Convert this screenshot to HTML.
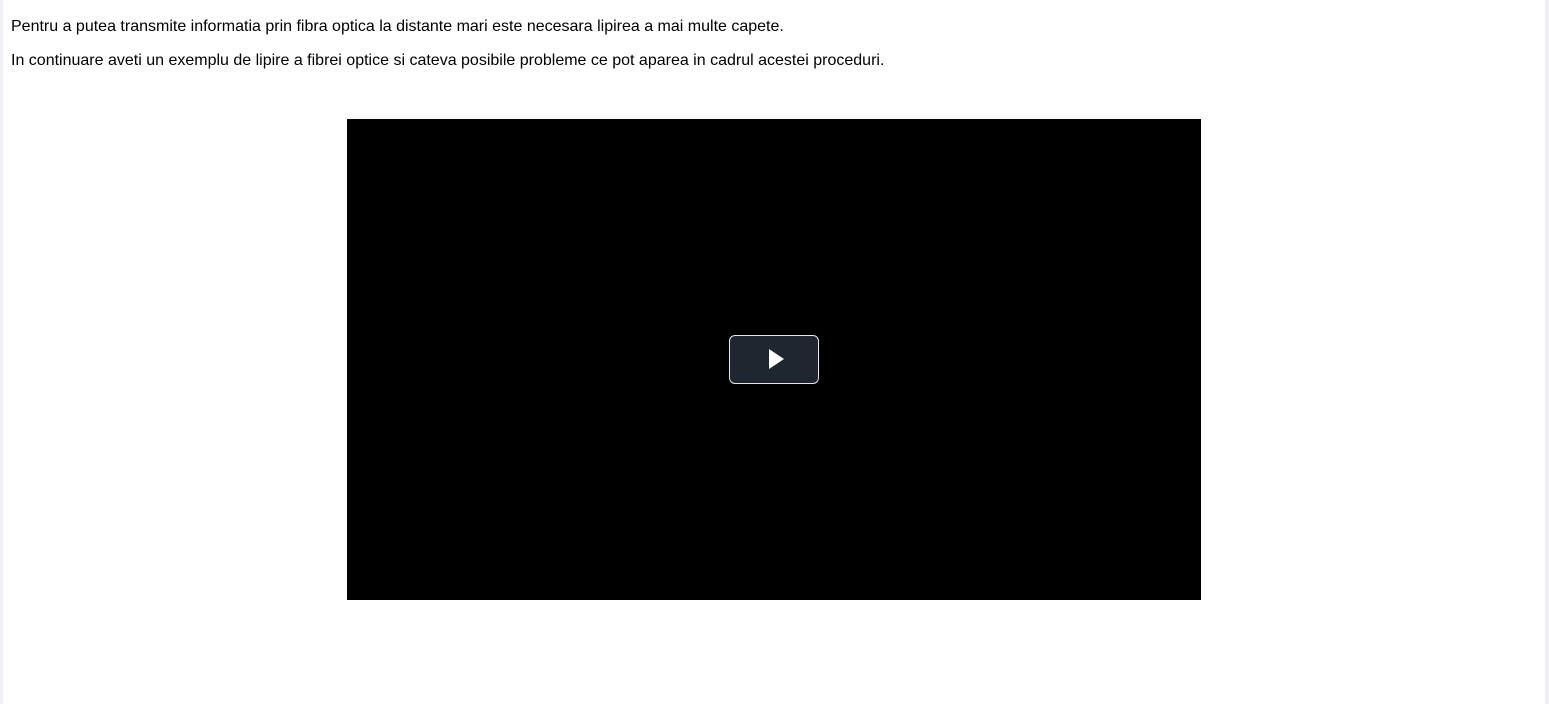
<!DOCTYPE html>
<html><head><meta charset="utf-8"><style>
html,body{margin:0;padding:0;width:1549px;height:704px;overflow:hidden;background:#eef0f5;}
.main{position:absolute;left:3px;top:0;width:1542px;height:704px;background:#fff;}
p{position:absolute;left:8px;margin:0;font:16px "Liberation Sans",Arial,sans-serif;color:#000;white-space:nowrap;}
.v{position:absolute;left:344px;top:119px;width:854px;height:481px;background:#000;}
.b{position:absolute;left:382px;top:216px;width:90px;height:49px;border:1px solid #e6e6e6;border-radius:6px;background:#202630;box-sizing:border-box;}
</style></head><body>
<div class="main">
<p style="top:18px">Pentru a putea transmite informatia prin fibra optica la distante mari este necesara lipirea a mai multe capete.</p>
<p style="top:52px">In continuare aveti un exemplu de lipire a fibrei optice si cateva posibile probleme ce pot aparea in cadrul acestei proceduri.</p>
<div class="v"><div class="b"><svg width="90" height="49" style="position:absolute;left:-1px;top:-1px"><path d="M40 14 L55 24 L40 34 Z" fill="#fff"/></svg></div></div>
</div>
</body></html>
